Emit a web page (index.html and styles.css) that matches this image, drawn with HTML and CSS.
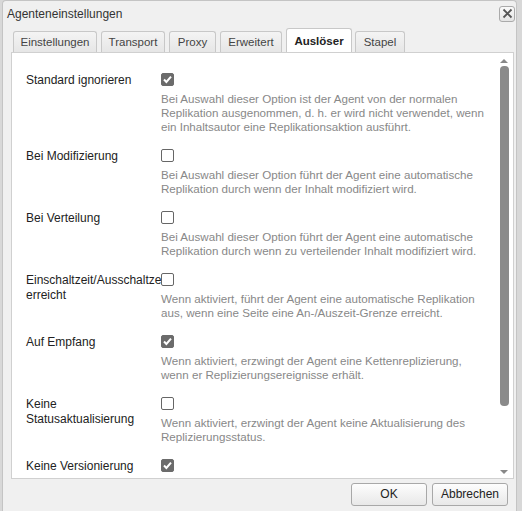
FILE: index.html
```html
<!DOCTYPE html>
<html lang="de">
<head>
<meta charset="utf-8">
<title>Agenteneinstellungen</title>
<link rel="stylesheet" href="styles.css">
</head>
<body>
<div class="dialog">
  <div class="titlebar">
    <span class="title">Agenteneinstellungen</span>
    <button class="close" aria-label="Schließen">
      <svg width="11" height="11" viewBox="0 0 11 11"><path d="M1.5 1.5 L9.5 9.5 M9.5 1.5 L1.5 9.5" stroke="#555" stroke-width="1.8" fill="none"/></svg>
    </button>
  </div>
  <div class="tabs">
    <div class="tab">Einstellungen</div>
    <div class="tab">Transport</div>
    <div class="tab">Proxy</div>
    <div class="tab">Erweitert</div>
    <div class="tab active">Auslöser</div>
    <div class="tab">Stapel</div>
  </div>
  <div class="panel">
    <div class="scroll">
      <div class="row">
        <div class="label">Standard ignorieren</div>
        <div class="field">
          <span class="cb checked"></span>
          <p class="desc">Bei Auswahl dieser Option ist der Agent von der normalen Replikation ausgenommen, d. h. er wird nicht verwendet, wenn ein Inhaltsautor eine Replikationsaktion ausführt.</p>
        </div>
      </div>
      <div class="row">
        <div class="label">Bei Modifizierung</div>
        <div class="field">
          <span class="cb"></span>
          <p class="desc">Bei Auswahl dieser Option führt der Agent eine automatische Replikation durch wenn der Inhalt modifiziert wird.</p>
        </div>
      </div>
      <div class="row">
        <div class="label">Bei Verteilung</div>
        <div class="field">
          <span class="cb"></span>
          <p class="desc">Bei Auswahl dieser Option führt der Agent eine automatische Replikation durch wenn zu verteilender Inhalt modifiziert wird.</p>
        </div>
      </div>
      <div class="row">
        <div class="label"><span class="nowrap">Einschaltzeit/Ausschaltzeit</span> erreicht</div>
        <div class="field">
          <span class="cb"></span>
          <p class="desc">Wenn aktiviert, führt der Agent eine automatische Replikation aus, wenn eine Seite eine An-/Auszeit-Grenze erreicht.</p>
        </div>
      </div>
      <div class="row">
        <div class="label">Auf Empfang</div>
        <div class="field">
          <span class="cb checked"></span>
          <p class="desc">Wenn aktiviert, erzwingt der Agent eine Kettenreplizierung, wenn er Replizierungsereignisse erhält.</p>
        </div>
      </div>
      <div class="row">
        <div class="label">Keine Statusaktualisierung</div>
        <div class="field">
          <span class="cb"></span>
          <p class="desc">Wenn aktiviert, erzwingt der Agent keine Aktualisierung des Replizierungsstatus.</p>
        </div>
      </div>
      <div class="row">
        <div class="label">Keine Versionierung</div>
        <div class="field">
          <span class="cb checked"></span>
          <p class="desc">Wenn aktiviert, erstellt der Agent keine Versionen der replizierten Seiten.</p>
        </div>
      </div>
    </div>
    <div class="scrollbar">
      <span class="arrow up"></span>
      <div class="track"><div class="thumb"></div></div>
      <span class="arrow down"></span>
    </div>
  </div>
  <div class="footer">
    <button class="btn">OK</button>
    <button class="btn">Abbrechen</button>
  </div>
</div>
</body>
</html>
```

FILE: styles.css
```css
html, body {
  margin: 0;
  padding: 0;
  height: 100%;
}
body {
  background: #d8d8d8;
  font-family: "Liberation Sans", Arial, sans-serif;
  font-size: 12px;
  color: #333;
  overflow: hidden;
}
.dialog {
  margin-left: 2px;
  width: 515px;
  height: 511px;
  box-sizing: border-box;
  background: #f0f0f0;
  border: 1px solid #c4c4c4;
  border-bottom: none;
  border-radius: 4px 4px 0 0;
  display: flex;
  flex-direction: column;
}
.titlebar {
  height: 25px;
  display: flex;
  align-items: center;
  justify-content: space-between;
  padding: 0 1px 0 4px;
}
.title {
  font-size: 12px;
  color: #333;
}
.close {
  width: 16px;
  height: 16px;
  padding: 0;
  border: 1px solid #aaa;
  border-radius: 3px;
  background: linear-gradient(#fafafa, #e4e4e4);
  display: flex;
  align-items: center;
  justify-content: center;
}
.tabs {
  display: flex;
  gap: 4px;
  padding: 2px 0 0 10px;
  align-items: flex-end;
  height: 24px;
}
.tab {
  height: 21px;
  box-sizing: border-box;
  border: 1px solid #c8c8c8;
  border-bottom: none;
  border-radius: 3px 3px 0 0;
  background: linear-gradient(#f4f4f4, #e6e6e6);
  display: flex;
  align-items: center;
  justify-content: center;
  color: #444;
  font-size: 11.5px;
}
.tab:nth-child(1) { width: 84px; }
.tab:nth-child(2) { width: 64px; }
.tab:nth-child(3) { width: 47px; }
.tab:nth-child(4) { width: 62px; }
.tab:nth-child(5) { width: 66px; }
.tab:nth-child(6) { width: 50px; margin-left: -1px; }
.tab.active {
  height: 24px;
  background: #fff;
  font-weight: bold;
  color: #222;
}
.panel {
  margin: 0 2px 0 8px;
  height: 425px;
  background: #fff;
  border: 1px solid #d0d0d0;
  display: flex;
  overflow: hidden;
}
.scroll {
  flex: 1;
  padding: 19px 0 0 14px;
  overflow: hidden;
}
.row {
  display: grid;
  grid-template-columns: 135px 1fr;
  margin-bottom: 14px;
}
.label {
  line-height: 15px;
  padding-top: 1px;
  color: #222;
}
.nowrap {
  white-space: nowrap;
}
.field {
  position: relative;
}
.cb {
  display: block;
  width: 13px;
  height: 13px;
  box-sizing: border-box;
  border: 1px solid #666;
  border-radius: 2px;
  background: #fff;
  margin: 1px 0 4px;
}
.cb.checked {
  background: #6b6b6b url("data:image/svg+xml;utf8,<svg xmlns='http://www.w3.org/2000/svg' width='13' height='13' viewBox='0 0 13 13'><path d='M3 6.5 L5.4 9 L10 3.6' stroke='white' stroke-width='2' fill='none'/></svg>") no-repeat -1px -1px;
  border-color: #6b6b6b;
}
.desc {
  margin: 0;
  padding-top: 2px;
  color: #888;
  line-height: 14px;
  font-size: 11.6px;
  width: 328px;
}
.scrollbar {
  width: 14px;
  display: flex;
  flex-direction: column;
  align-items: center;
  padding: 6px 2px 4px 0;
}
.arrow {
  width: 0;
  height: 0;
  border-left: 4px solid transparent;
  border-right: 4px solid transparent;
}
.arrow.up {
  border-bottom: 4px solid #888;
}
.arrow.down {
  border-top: 4px solid #888;
}
.track {
  flex: 1;
  width: 100%;
  display: flex;
  justify-content: center;
  padding: 3px 0 50px;
}
.thumb {
  width: 9px;
  height: 340px;
  border-radius: 4px;
  background: #8a8a8a;
}
.footer {
  flex: 1;
  display: flex;
  justify-content: flex-end;
  align-items: center;
  gap: 5px;
  padding: 0 8px 2px 0;
}
.btn {
  width: 76px;
  height: 23px;
  font-family: inherit;
  font-size: 12px;
  color: #222;
  border: 1px solid #a8a8a8;
  border-radius: 3px;
  background: linear-gradient(#fdfdfd, #e8e8e8);
}
```
